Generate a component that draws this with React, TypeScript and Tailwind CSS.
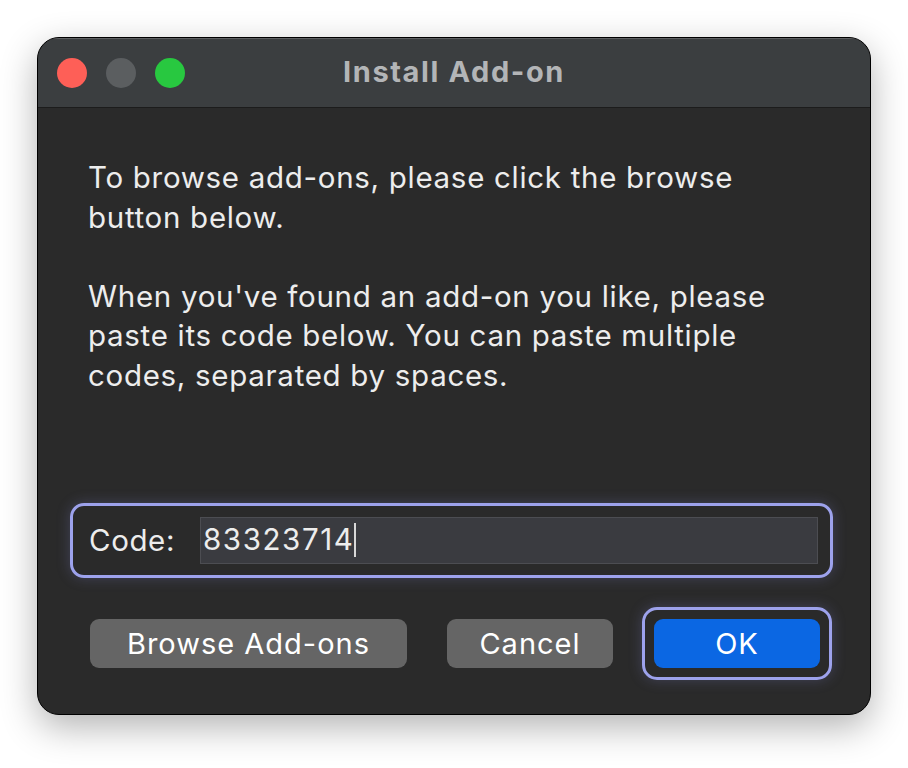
function TrafficLights() {
  return (
    <div className="flex items-center gap-[19px]">
      <span className="block w-[30px] h-[30px] rounded-full bg-[#fe5f57]" />
      <span className="block w-[30px] h-[30px] rounded-full bg-[#5b5e60]" />
      <span className="block w-[30px] h-[30px] rounded-full bg-[#28c840]" />
    </div>
  );
}

function Button({ label, width, primary }: { label: string; width: string; primary?: boolean }) {
  return (
    <button
      className={`${width} h-[49px] rounded-[9px] text-[29px] tracking-[1px] leading-none text-white ${
        primary ? "bg-[#0b67e3]" : "bg-[#656565]"
      }`}
    >
      {label}
    </button>
  );
}

export default function App() {
  return (
    <div
      className="w-[908px] h-[768px] bg-white pt-[37px] pl-[37px]"
      style={{ fontFamily: "Inter, 'Noto Sans', sans-serif" }}
    >
      <div className="w-[834px] h-[678px] rounded-[22px] border border-black bg-[#2a2a2a] overflow-hidden flex flex-col shadow-[0_12px_36px_rgba(0,0,0,0.3)]">
        {/* title bar */}
        <div className="relative h-[70px] shrink-0 bg-[#3b3e40] border-b border-[#1c1c1c] shadow-[inset_0_1px_0_rgba(255,255,255,0.18)] flex items-center pl-[19px]">
          <TrafficLights />
          <div className="absolute inset-0 flex items-center justify-center pb-[2px] pointer-events-none">
            <span className="text-[29px] font-bold text-[#b3b5b7] tracking-[1.6px]">Install Add-on</span>
          </div>
        </div>

        <div className="flex-1 flex flex-col px-[32px]">
          <div className="pl-[18px] pt-[50px] text-[29.5px] leading-[39.6px] tracking-[0.7px] text-[#ededed]">
            <p>To browse add-ons, please click the browse</p>
            <p>button below.</p>
            <p>&nbsp;</p>
            <p>When you've found an add-on you like, please</p>
            <p>paste its code below. You can paste multiple</p>
            <p>codes, separated by spaces.</p>
          </div>

          {/* code field */}
          <div className="mt-[107px] mr-[5px] h-[75px] rounded-[14px] border-[3px] border-[#9da2ec] shadow-[0_0_14px_rgba(140,145,230,0.25)] flex items-center pl-[16px] pr-[12px]">
            <span className="text-[29.5px] tracking-[0.6px] text-[#ededed] w-[111px]">Code:</span>
            <div className="flex-1 h-[47px] bg-[#3a3b40] border border-[#4c4d52] flex items-center pl-[2px]">
              <span className="text-[29.5px] tracking-[1.6px] text-[#ededed] leading-none">83323714</span>
              <span className="block w-[2px] h-[34px] bg-[#d8d8d8]" />
            </div>
          </div>

          {/* buttons */}
          <div className="mt-[29px] flex items-center pl-[20px]">
            <Button label="Browse Add-ons" width="w-[317px]" />
            <div className="ml-[40px]">
              <Button label="Cancel" width="w-[166px]" />
            </div>
            <div className="ml-[29px] p-[9px] rounded-[15px] border-[3px] border-[#9da2ec] shadow-[0_0_14px_rgba(140,145,230,0.25)]">
              <Button label="OK" width="w-[166px]" primary />
            </div>
          </div>
        </div>
      </div>
    </div>
  );
}
